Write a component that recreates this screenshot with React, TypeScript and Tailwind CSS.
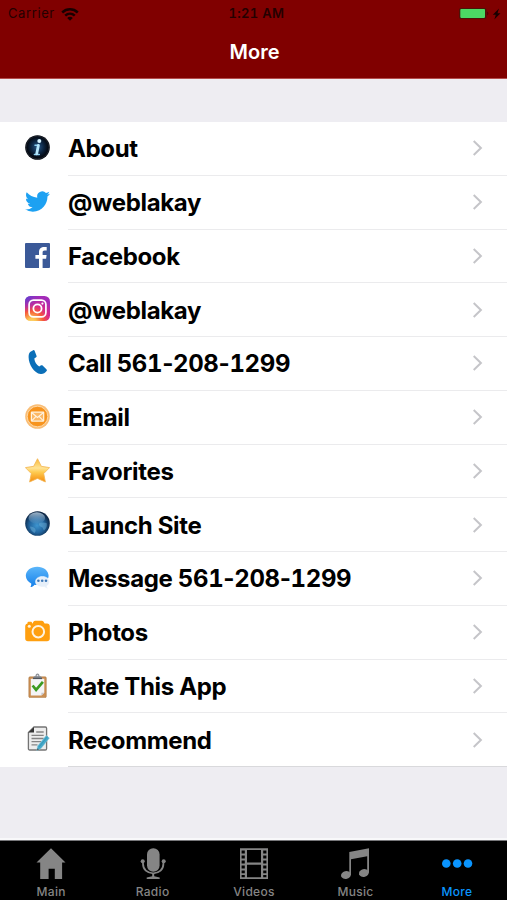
import type { ReactNode } from 'react'

function InfoIcon() {
  return (
    <svg viewBox="0 0 25 25" className="h-[25px] w-[25px]">
      <defs>
        <radialGradient id="info-bg" cx="50%" cy="48%" r="52%">
          <stop offset="0" stopColor="#28598a" />
          <stop offset="0.5" stopColor="#0c2440" />
          <stop offset="0.85" stopColor="#03070f" />
          <stop offset="1" stopColor="#0a0c12" />
        </radialGradient>
      </defs>
      <circle cx="12.5" cy="12.5" r="12.3" fill="url(#info-bg)" />
      <circle cx="12.5" cy="12.5" r="11.4" fill="none" stroke="#2c3542" strokeWidth="0.6" />
      <circle cx="14.3" cy="5.9" r="2" fill="#d5f3ff" />
      <path d="M10 10.2h3.3M9.4 19.4h4.9" fill="none" stroke="#8acdf0" strokeWidth="1.5" strokeLinecap="round" />
      <path d="M13.4 10.3 11.7 18.8" fill="none" stroke="#b5e6fb" strokeWidth="2.8" strokeLinecap="round" />
    </svg>
  )
}

function TwitterIcon() {
  return (
    <svg viewBox="0 0 24 24" className="h-[25px] w-[25px]">
      <path
        fill="#1da1f2"
        d="M23.95 4.57a10 10 0 0 1-2.82.77 4.96 4.96 0 0 0 2.16-2.72c-.95.55-2 .96-3.13 1.18a4.92 4.92 0 0 0-8.38 4.48C7.69 8.1 4.07 6.13 1.64 3.16a4.82 4.82 0 0 0-.67 2.48c0 1.71.87 3.21 2.19 4.1a4.9 4.9 0 0 1-2.23-.62v.06a4.92 4.92 0 0 0 3.95 4.83 5 5 0 0 1-2.21.08 4.94 4.94 0 0 0 4.6 3.42A9.87 9.87 0 0 1 0 19.54a13.99 13.99 0 0 0 7.55 2.21c9.05 0 14-7.5 14-13.98 0-.21 0-.42-.02-.63a9.94 9.94 0 0 0 2.46-2.55z"
      />
    </svg>
  )
}

function FacebookIcon() {
  return (
    <svg viewBox="0 0 25 25" className="h-[25px] w-[25px]">
      <rect width="25" height="25" rx="1" fill="#3b5998" />
      <path
        fill="#fff"
        d="M14 25v-9.3h-3.6V12H14V9.1c0-3.6 2.1-5.2 5.2-5.2 1.3 0 2.1.1 2.5.2v3.5h-2c-1.6 0-2.1.8-2.1 2V12h4l-.5 3.7h-3.5V25z"
      />
    </svg>
  )
}

function InstagramIcon() {
  return (
    <svg viewBox="0 0 25 25" className="h-[25px] w-[25px]">
      <defs>
        <radialGradient id="ig-warm" cx="27%" cy="107%" r="105%">
          <stop offset="0" stopColor="#fdd975" />
          <stop offset="0.18" stopColor="#fcc250" />
          <stop offset="0.45" stopColor="#f5573b" />
          <stop offset="0.68" stopColor="#d9298b" />
          <stop offset="1" stopColor="#a32bb8" />
        </radialGradient>
        <radialGradient id="ig-cool" cx="0%" cy="0%" r="65%">
          <stop offset="0" stopColor="#5045d6" />
          <stop offset="1" stopColor="#8a2fc4" stopOpacity="0" />
        </radialGradient>
      </defs>
      <rect width="25" height="25" rx="5.5" fill="url(#ig-warm)" />
      <rect width="25" height="25" rx="5.5" fill="url(#ig-cool)" />
      <rect x="4.1" y="4.1" width="16.8" height="16.8" rx="4.4" fill="none" stroke="#fff" strokeWidth="1.7" />
      <circle cx="12.5" cy="12.5" r="4.1" fill="none" stroke="#fff" strokeWidth="1.8" />
      <circle cx="17.4" cy="7.6" r="1.1" fill="#fff" />
    </svg>
  )
}

function PhoneIcon() {
  return (
    <svg viewBox="0 0 25 25" className="h-[25px] w-[25px]">
      <path
        fill="#0b6fb8"
        d="M5.1 1.9 8.2.2c.5-.3 1-.1 1.3.4l2.1 5.3c.2.6 0 1.1-.5 1.4L9.300 8.5c.3 3.200 2.300 6.500 4.900 8l1.900-1.200c.5-.3 1-.2 1.500.2l4 4c.4.5.4 1 0 1.500-1.600 2-3.400 3.200-5.900 3C8.900 23.200 3.700 14.500 3.600 7.200c0-2.200.3-4.300 1.500-5.300z"
      />
    </svg>
  )
}

function EmailIcon() {
  return (
    <svg viewBox="0 0 25 25" className="h-[25px] w-[25px]">
      <circle cx="12.5" cy="12.5" r="12.3" fill="#f9bd75" />
      <circle cx="12.5" cy="12.5" r="10.3" fill="#f7941e" stroke="#fddcb0" strokeWidth="0.9" />
      <rect x="6.4" y="8.1" width="12.3" height="9" rx="0.5" fill="#fbb866" stroke="#fff3e0" strokeWidth="1.2" />
      <path d="m6.6 8.5 5.9 5 6-5M6.7 16.9l4.1-4.3M18.4 16.9l-4.1-4.3" fill="none" stroke="#fff3e0" strokeWidth="1.1" />
    </svg>
  )
}

function StarIcon() {
  return (
    <svg viewBox="0 0 25 25" className="h-[25px] w-[25px]">
      <defs>
        <linearGradient id="star-fill" x1="0" y1="0" x2="0" y2="1">
          <stop offset="0" stopColor="#f9b934" />
          <stop offset="0.4" stopColor="#ffe394" />
          <stop offset="0.58" stopColor="#fecb50" />
          <stop offset="1" stopColor="#f58a0c" />
        </linearGradient>
      </defs>
      <path
        d="m12.5.7 3.8 7.6 8.3 1.3-5.9 6 1.7 8.4-7.9-3.600L4.600 24l1.700-8.400L.4 9.600l8.300-1.300z"
        fill="url(#star-fill)"
        stroke="#f3b553"
        strokeWidth="0.8"
        strokeLinejoin="round"
      />
    </svg>
  )
}

function GlobeIcon() {
  return (
    <svg viewBox="0 0 25 25" className="h-[25px] w-[25px]">
      <defs>
        <radialGradient id="globe-bg" cx="48%" cy="58%" r="55%">
          <stop offset="0" stopColor="#3e95cf" />
          <stop offset="0.55" stopColor="#21659f" />
          <stop offset="1" stopColor="#0b2442" />
        </radialGradient>
        <linearGradient id="globe-gloss" x1="0" y1="0" x2="0" y2="1">
          <stop offset="0" stopColor="#c3d7e8" stopOpacity="0.8" />
          <stop offset="1" stopColor="#7eaacb" stopOpacity="0.1" />
        </linearGradient>
      </defs>
      <circle cx="12.5" cy="12.5" r="12.3" fill="url(#globe-bg)" />
      <path
        d="M14 12.5c2-1.5 5-1 7.5-.5 1 3-.5 6-2.5 7.5-1-1-1-3-2.5-3.5s-3-1.5-2.5-3.500zM5 15.500c2 0 5 1 5.500 3s-.5 2.500-1 3.500C7 20.500 5.200 18.500 5 15.500z"
        fill="#73b5dc"
        opacity="0.45"
      />
      <ellipse cx="11.8" cy="7" rx="8.3" ry="5.7" fill="url(#globe-gloss)" />
    </svg>
  )
}

function MessageIcon() {
  return (
    <svg viewBox="0 0 25 25" className="h-[25px] w-[25px]">
      <defs>
        <linearGradient id="msg-blue" x1="0" y1="0" x2="0" y2="1">
          <stop offset="0" stopColor="#5bb6fa" />
          <stop offset="1" stopColor="#147fe9" />
        </linearGradient>
      </defs>
      <path
        fill="url(#msg-blue)"
        d="M12.2 1.8c6.4 0 11.4 3.9 11.4 9s-5 9.2-11.4 9.2c-.9 0-1.800-.1-2.600-.2-1.100 1.400-2.800 2.300-4.300 2.300.7-1 1.100-2.400.9-3.700C3 16.800.8 14 .8 10.800c0-5.100 5-9 11.400-9z"
      />
      <path
        fill="#e6eff9"
        stroke="#fff"
        strokeWidth="0.5"
        d="M17.4 11.5c4.100 0 6.900 2.300 6.900 5.300 0 1.900-.9 3.300-2.400 4.200 0 1 .5 1.700 1.100 2.400-1.400 0-2.700-.6-3.500-1.500-5 .8-9-1.600-9-5.100 0-3 2.800-5.300 6.900-5.300z"
      />
      <circle cx="13.4" cy="15.8" r="1.3" fill="#3d79b9" />
      <circle cx="17.2" cy="15.8" r="1.3" fill="#3d79b9" />
      <circle cx="21" cy="15.8" r="1.3" fill="#3d79b9" />
    </svg>
  )
}

function CameraIcon() {
  return (
    <svg viewBox="0 0 25 25" className="h-[25px] w-[25px]">
      <rect x="2.5" y="2.7" width="4.5" height="3" rx="1" fill="#ff9f0f" />
      <path
        fill="#ff9f0f"
        d="M3 4.6h4.4l1.2-2c.4-.6.9-.9 1.6-.9h6.600c.7 0 1.200.3 1.600.9l1.200 2H22c1.700 0 2.800 1.100 2.800 2.800v12.100c0 1.700-1.100 2.800-2.800 2.800H3c-1.700 0-2.800-1.100-2.800-2.800V7.400c0-1.700 1.100-2.800 2.800-2.800z"
      />
      <circle cx="13.3" cy="12.7" r="5.8" fill="none" stroke="#fff3df" strokeWidth="2" />
      <circle cx="4.3" cy="7.3" r="1.5" fill="#fff3df" />
    </svg>
  )
}

function ClipboardIcon() {
  return (
    <svg viewBox="0 0 25 25" className="h-[25px] w-[25px]">
      <rect x="3.8" y="3.8" width="17.5" height="20.8" rx="1.2" fill="#ca8e52" stroke="#a87643" strokeWidth="0.5" />
      <path d="M5.8 5.8h13.5v14l-2.9 2.7H5.800z" fill="#f4f4f6" />
      <path d="M16.4 22.5v-2.800h2.900z" fill="#c4c4cb" />
      <path d="M8 5.5c0-1.600 1-2.300 2.500-2.500C10.500 1.500 11.300.5 12.500.5s2 1 2 2.500c1.500.2 2.500.9 2.500 2.500z" fill="#8b8f96" />
      <circle cx="12.5" cy="2.5" r="0.8" fill="#e5e5e8" />
      <path d="M8 5.4h9" stroke="#53575e" strokeWidth="1.4" />
      <path d="m7.6 12.5 3.5 4.3 6.800-8" fill="none" stroke="#3c9b21" strokeWidth="2.7" />
    </svg>
  )
}

function DocumentIcon() {
  return (
    <svg viewBox="0 0 25 25" className="h-[25px] w-[25px]">
      <path
        d="M9 1h11.3c.8 0 1.3.5 1.3 1.3v20.400c0 .8-.5 1.300-1.300 1.300H4.700c-.8 0-1.300-.5-1.300-1.300V6.600z"
        fill="#ededed"
        stroke="#747474"
        strokeWidth="1.3"
      />
      <path d="M9 1v5.600H3.400z" fill="#363636" />
      <path d="M11.2 6h7.5M6.500 9.300h12.200M6.500 12.500h12.200M6.500 15.700h9.800M6.500 18.900h6" stroke="#858585" strokeWidth="1.3" />
      <path d="m21.2 9.600 3.200 2.400-8.400 10.500-4.200 2 .8-4.400z" fill="#46a9c9" stroke="#8dcbdc" strokeWidth="0.5" />
      <path d="m14.2 20.800 8.300-10.300" stroke="#2f8fb2" strokeWidth="0.7" />
      <path d="m12.1 24.300.4-2 1.400 1.200z" fill="#4b4b4b" />
    </svg>
  )
}

const rows: { label: string; phone?: string; icon: ReactNode }[] = [
  { label: 'About', icon: <InfoIcon /> },
  { label: '@weblakay', icon: <TwitterIcon /> },
  { label: 'Facebook', icon: <FacebookIcon /> },
  { label: '@weblakay', icon: <InstagramIcon /> },
  { label: 'Call', phone: '561-208-1299', icon: <PhoneIcon /> },
  { label: 'Email', icon: <EmailIcon /> },
  { label: 'Favorites', icon: <StarIcon /> },
  { label: 'Launch Site', icon: <GlobeIcon /> },
  { label: 'Message', phone: '561-208-1299', icon: <MessageIcon /> },
  { label: 'Photos', icon: <CameraIcon /> },
  { label: 'Rate This App', icon: <ClipboardIcon /> },
  { label: 'Recommend', icon: <DocumentIcon /> },
]

// Tabular digits, but the hyphens keep their own width
function PhoneNumber({ value }: { value: string }) {
  return (
    <>
      {' '}
      {value.split('-').map((part, i) => (
        <span key={i}>
          {i > 0 && '-'}
          <span className="tabular-nums">{part}</span>
        </span>
      ))}
    </>
  )
}

const tabs: { label: string; icon: ReactNode; active?: boolean }[] = [
  {
    label: 'Main',
    icon: <path d="M16 .3 30.5 14.5h-3.400V31h-7.300V20.800h-6.200V31H5.200V14.500H1.500z" />,
  },
  {
    label: 'Radio',
    icon: (
      <>
        <rect x="10" y="0.3" width="12.6" height="23.4" rx="6.2" />
        <path
          d="M6 12v3.800c0 5.700 4.200 9.500 10.200 9.500s10.200-3.800 10.200-9.500V12"
          fill="none"
          stroke="currentColor"
          strokeWidth="1.8"
        />
        <circle cx="5.7" cy="13.2" r="2" />
        <circle cx="26.7" cy="13.2" r="2" />
        <path d="M15.2 25h2v3.200l5.500 1.300V31h-13v-1.500l5.500-1.300z" />
      </>
    ),
  },
  {
    label: 'Videos',
    icon: (
      <path
        fillRule="evenodd"
        d="M2 .3h28V31H2zM9 2v12.400h14V2zM9 16.700v12.600h14V16.700zM3.600 2.500v3h3.200v-3zM3.600 7.500v3h3.200v-3zM3.600 12.500v3h3.200v-3zM3.600 17.500v3h3.200v-3zM3.600 22.500v2.700h3.200v-2.700zM3.600 27v2.300h3.200V27zM25.200 2.500v3h3.200v-3zM25.200 7.500v3h3.200v-3zM25.200 12.500v3h3.200v-3zM25.200 17.500v3h3.200v-3zM25.200 22.500v2.700h3.200v-2.700zM25.200 27v2.300h3.200V27z"
      />
    ),
  },
  {
    label: 'Music',
    icon: (
      <>
        <path d="M10.3 3.900 30 .3v24.500h-1.800V8.300L12 11.300v15.700h-1.700z" />
        <ellipse cx="7" cy="27" rx="5" ry="3.9" transform="rotate(-15 7 27)" />
        <ellipse cx="24.9" cy="25" rx="5" ry="3.9" transform="rotate(-15 24.9 25)" />
      </>
    ),
  },
  {
    label: 'More',
    active: true,
    icon: (
      <>
        <circle cx="5.3" cy="15.5" r="4.3" />
        <circle cx="16.2" cy="15.5" r="4.3" />
        <circle cx="27" cy="15.5" r="4.3" />
      </>
    ),
  },
]

export default function App() {
  return (
    <div className="flex h-[900px] w-[507px] flex-col overflow-hidden bg-[#eeedf2] font-['Inter',sans-serif]">
      {/* Status bar and title */}
      <header className="flex h-[79px] shrink-0 flex-col border-b border-[#b34d4d] bg-[#800000]">
        <div className="grid h-7 grid-cols-3 items-center pr-[5px] pl-2 text-[13px] text-[#240000]">
          <div className="flex items-center gap-[6px]">
            <span className="tracking-[0.6px]">Carrier</span>
            <svg viewBox="0 0 18 13" className="h-[13px] w-[18px]" fill="none" stroke="#180000" strokeWidth="2.5">
              <path d="M1.2 4.500c4.500-4.200 11.100-4.200 15.600 0M4.200 7.700c2.800-2.600 6.800-2.600 9.600 0" />
              <path d="M6.2 9.900c1.600-1.500 4-1.500 5.600 0L9 12.700z" fill="#180000" stroke="none" />
            </svg>
          </div>
          <span className="pl-[3px] text-center font-semibold tracking-[0.3px] whitespace-nowrap tabular-nums">1:21 AM</span>
          <svg viewBox="0 0 44 14" className="h-[14px] w-[44px] justify-self-end">
            <rect x="1" y="1" width="27.5" height="11" rx="2" fill="#4a1408" />
            <rect x="2.3" y="2.1" width="24.7" height="8.8" rx="0.8" fill="#4cd964" />
            <path d="M29.5 4.500c1 .5 1 3.500 0 4z" fill="#240000" />
            <path d="m41 1.500-6.200 6.300h3l-1.500 4.700 6.200-6.300h-3z" fill="#180000" />
          </svg>
        </div>
        <h1 className="pt-[9px] pl-[2px] text-center text-[20px] leading-[30px] font-semibold text-white">More</h1>
      </header>

      {/* Menu list */}
      <ul className="mt-[43px] h-[645px] shrink-0 bg-white">
        {rows.map((row, i) => (
          <li key={i} className="group flex h-[53.75px] pl-[25px]">
            <span className="mt-[13px] w-[43px] shrink-0">{row.icon}</span>
            <div className="flex flex-1 items-center justify-between border-b border-[#ebebed] pr-[24px] group-last:border-[#d9d9dc]">
              <span className="pt-[2px] text-[24px] leading-none font-[650] tracking-[-0.35px] whitespace-nowrap text-black">
                {row.label}
                {row.phone && <PhoneNumber value={row.phone} />}
              </span>
              <svg viewBox="0 0 11 16" className="h-4 w-[11px]" fill="none" stroke="#c5c5c9" strokeWidth="2">
                <path d="m1.7 1 7.200 7-7.200 7" />
              </svg>
            </div>
          </li>
        ))}
      </ul>

      {/* Tab bar */}
      <nav className="mt-auto flex h-[62px] shrink-0 flex-col border-t-2 border-[#f8f8fa]">
        <div className="flex flex-1 border-t border-[#77777a] bg-black">
          {tabs.map((tab) => (
            <button
              key={tab.label}
              type="button"
              className={`flex flex-1 flex-col items-center pt-[7px] pl-px ${tab.active ? 'text-[#0a95ff]' : 'text-[#858585]'}`}
            >
              <svg viewBox="0 0 32 32" className="h-8 w-8" fill="currentColor">
                {tab.icon}
              </svg>
              <span className="mt-[4px] text-[12px] leading-4 font-[450] tracking-[0.3px]">{tab.label}</span>
            </button>
          ))}
        </div>
      </nav>
    </div>
  )
}
